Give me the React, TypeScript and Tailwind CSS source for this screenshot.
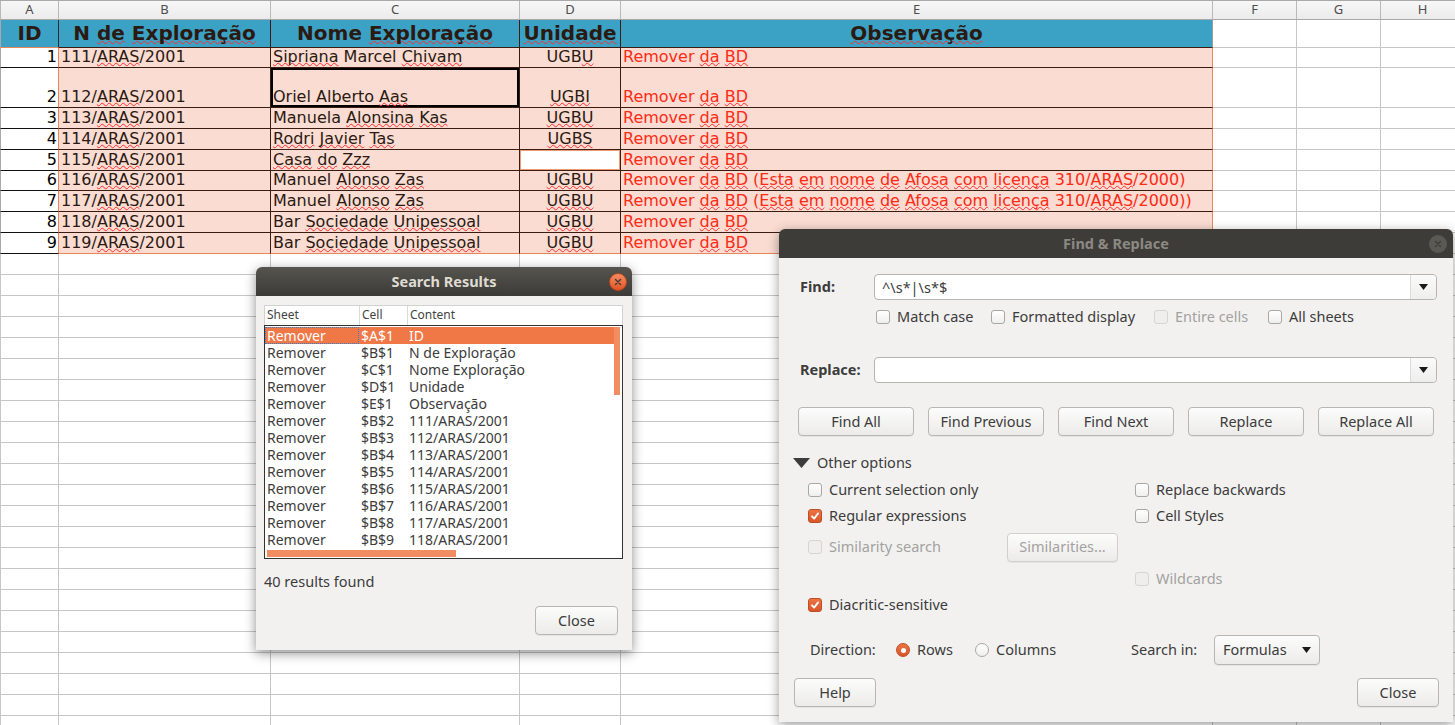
import React from "react"

const colW = ["w-[59px]", "w-[212px]", "w-[249px]", "w-[101px]", "w-[592px]", "w-[84px]", "w-[84px]", "w-[84px]"]
const letters = ["A", "B", "C", "D", "E", "F", "G", "H"]

// words between ~ get the spell-check squiggle
function Spell({ text }: { text: string }) {
  const parts = text.split("~")
  return (
    <span className="whitespace-pre">
      {parts.map((p, i) =>
        i % 2 ? (
          <span key={i} className="[text-decoration:underline_wavy_#ff2b2b_1px] [text-underline-offset:0px] [text-decoration-skip-ink:none]">
            {p}
          </span>
        ) : (
          p
        ),
      )}
    </span>
  )
}

type Row = { h: string; id: string; b: string; c: string; d: string; e: string; emptyD?: boolean; cursor?: boolean; last?: boolean }

const rows: Row[] = [
  { h: "h-[20px]", id: "1", b: "111/~ARAS~/2001", c: "~Sipriana~ Marcel ~Chivam~", d: "UGB~U~", e: "Remover ~da~ ~BD~" },
  { h: "h-[40px]", id: "2", b: "112/~ARAS~/2001", c: "Oriel Alberto ~Aas~", d: "~UGBI~", e: "Remover ~da~ ~BD~", cursor: true },
  { h: "h-[21px]", id: "3", b: "113/~ARAS~/2001", c: "Manuela ~Alonsina~ ~Kas~", d: "~UGBU~", e: "Remover ~da~ ~BD~" },
  { h: "h-[21px]", id: "4", b: "114/~ARAS~/2001", c: "~Rodri~ ~Javier~ ~Tas~", d: "~UGBS~", e: "Remover ~da~ ~BD~" },
  { h: "h-[21px]", id: "5", b: "115/~ARAS~/2001", c: "~Casa~ ~do~ ~Zzz~", d: "", e: "Remover ~da~ ~BD~", emptyD: true },
  { h: "h-[20px]", id: "6", b: "116/~ARAS~/2001", c: "Manuel ~Alonso~ ~Zas~", d: "~UGBU~", e: "Remover ~da~ ~BD~ (~Esta~ ~em~ ~nome~ ~de~ ~Afosa~ ~com~ ~licença~ 310/~ARAS~/2000)" },
  { h: "h-[21px]", id: "7", b: "117/~ARAS~/2001", c: "Manuel ~Alonso~ ~Zas~", d: "~UGBU~", e: "Remover ~da~ ~BD~ (~Esta~ ~em~ ~nome~ ~de~ ~Afosa~ ~com~ ~licença~ 310/~ARAS~/2000))" },
  { h: "h-[21px]", id: "8", b: "118/~ARAS~/2001", c: "Bar ~Sociedade~ ~Unipessoal~", d: "~UGBU~", e: "Remover ~da~ ~BD~" },
  { h: "h-[21px]", id: "9", b: "119/~ARAS~/2001", c: "Bar ~Sociedade~ ~Unipessoal~", d: "~UGBU~", e: "Remover ~da~ ~BD~", last: true },
]

const results = [
  ["$A$1", "ID"],
  ["$B$1", "N de Exploração"],
  ["$C$1", "Nome Exploração"],
  ["$D$1", "Unidade"],
  ["$E$1", "Observação"],
  ["$B$2", "111/ARAS/2001"],
  ["$B$3", "112/ARAS/2001"],
  ["$B$4", "113/ARAS/2001"],
  ["$B$5", "114/ARAS/2001"],
  ["$B$6", "115/ARAS/2001"],
  ["$B$7", "116/ARAS/2001"],
  ["$B$8", "117/ARAS/2001"],
  ["$B$9", "118/ARAS/2001"],
]

function GridCells() {
  return (
    <>
      <div className="w-[84px] shrink-0 border-r border-b border-[#c6c6c6]" />
      <div className="w-[84px] shrink-0 border-r border-b border-[#c6c6c6]" />
      <div className="w-[84px] shrink-0 border-r border-b border-[#c6c6c6]" />
    </>
  )
}

function Sheet() {
  const cellText = "flex items-end whitespace-nowrap overflow-hidden text-[16px] leading-[19px] pb-[1px]"
  const headCell = "shrink-0 bg-[#3ba2c6] flex items-end justify-center whitespace-nowrap overflow-hidden pb-[3px]"
  return (
    <div className="flex flex-col font-['DejaVu_Sans',sans-serif] text-[#2b1a12]">
      {/* column letters */}
      <div className="flex h-[20px] border-t border-b border-[#a9a9a9] bg-linear-to-b from-[#f7f7f7] to-[#ebebeb]">
        {letters.map((l, i) => (
          <div
            key={l}
            className={`${colW[i]} shrink-0 border-r border-[#b9b9b9] ${i === 0 ? "border-l" : ""} flex items-center justify-center font-['Noto_Sans',sans-serif] text-[13px] text-[#4d4d4d]`}
          >
            {l}
          </div>
        ))}
      </div>

      {/* header row */}
      <div className="flex h-[28px] font-bold text-[20px] leading-[21px]">
        <div className={`w-[59px] border-l border-l-[#a9a9a9] border-r border-r-[#2b2b2b] border-b border-b-[#e9875c] ${headCell}`}>ID</div>
        <div className={`w-[212px] border-r border-b border-[#3b1c10] ${headCell}`}>
          <Spell text="N ~de~ ~Exploração~" />
        </div>
        <div className={`w-[249px] border-r border-b border-[#3b1c10] ${headCell}`}>
          <Spell text="Nome ~Exploração~" />
        </div>
        <div className={`w-[101px] border-r border-b border-[#3b1c10] ${headCell}`}>
          <Spell text="~Unidade~" />
        </div>
        <div className={`w-[592px] border-r border-r-[#9a9a9a] border-b border-b-[#3b1c10] ${headCell}`}>
          <Spell text="~Observação~" />
        </div>
        <GridCells />
      </div>

      {/* data rows */}
      {rows.map((r) => (
        <div key={r.id} className={`flex ${r.h}`}>
          <div className={`w-[59px] shrink-0 bg-white border-l border-l-[#a9a9a9] border-r border-r-[#e9875c] border-b border-b-[#111] justify-end pr-[1px] text-black ${cellText}`}>
            {r.id}
          </div>
          <div className={`w-[212px] shrink-0 bg-[#fadcd2] border-r border-r-[#3b1c10] border-b ${r.last ? "border-b-[#e9875c]" : "border-b-[#3b1c10]"} pl-[2px] ${cellText}`}>
            <Spell text={r.b} />
          </div>
          <div
            className={`w-[249px] shrink-0 bg-[#fadcd2] border-r border-r-[#3b1c10] border-b ${r.last ? "border-b-[#e9875c]" : "border-b-[#3b1c10]"} pl-[2px] ${cellText} ${r.cursor ? "shadow-[inset_0_0_0_2px_#000]" : ""}`}
          >
            <Spell text={r.c} />
          </div>
          <div
            className={`w-[101px] shrink-0 border-r border-r-[#3b1c10] border-b ${r.last ? "border-b-[#e9875c]" : "border-b-[#3b1c10]"} justify-center ${cellText} ${r.emptyD ? "bg-white shadow-[inset_0_0_0_1px_#ef9a70]" : "bg-[#fadcd2]"}`}
          >
            <Spell text={r.d} />
          </div>
          <div className={`w-[592px] shrink-0 bg-[#fadcd2] border-r border-r-[#e9875c] border-b ${r.last ? "border-b-[#e9875c]" : "border-b-[#3b1c10]"} pl-[2px] text-[#ff2a14] ${cellText}`}>
            <Spell text={r.e} />
          </div>
          <GridCells />
        </div>
      ))}

      {/* empty rows */}
      {Array.from({ length: 23 }).map((_, i) => (
        <div key={i} className="flex h-[21px]">
          <div className="w-[59px] shrink-0 border-l border-r border-b border-[#c6c6c6]" />
          <div className="w-[212px] shrink-0 border-r border-b border-[#c6c6c6]" />
          <div className="w-[249px] shrink-0 border-r border-b border-[#c6c6c6]" />
          <div className="w-[101px] shrink-0 border-r border-b border-[#c6c6c6]" />
          <div className="w-[592px] shrink-0 border-r border-b border-[#c6c6c6]" />
          <GridCells />
        </div>
      ))}
    </div>
  )
}

function Check({ checked, disabled }: { checked?: boolean; disabled?: boolean }) {
  if (checked)
    return (
      <span className="w-[14px] h-[14px] rounded-[3px] bg-linear-to-b from-[#ec7444] to-[#d9552a] border border-[#bf4d1f] flex items-center justify-center shrink-0">
        <svg width="10" height="10" viewBox="0 0 10 10">
          <path d="M2 5.3 L4.1 7.6 L8.1 2.4" stroke="white" strokeWidth="1.8" fill="none" strokeLinecap="round" strokeLinejoin="round" />
        </svg>
      </span>
    )
  return (
    <span
      className={`w-[14px] h-[14px] rounded-[3px] border shrink-0 ${disabled ? "border-[#d6d5d3] bg-[#efeeec]" : "border-[#a8a7a4] bg-linear-to-b from-white to-[#efefee]"}`}
    />
  )
}

function Opt({ label, checked, disabled, className }: { label: string; checked?: boolean; disabled?: boolean; className?: string }) {
  return (
    <div className={`flex items-center gap-[7px] whitespace-nowrap ${className ?? ""}`}>
      <Check checked={checked} disabled={disabled} />
      <span className={disabled ? "text-[#a3a2a0]" : "text-[#3c3c3c]"}>{label}</span>
    </div>
  )
}

function Btn({ children, className, disabled }: { children: React.ReactNode; className?: string; disabled?: boolean }) {
  return (
    <div
      className={`rounded-[4px] border bg-linear-to-b from-[#fcfcfc] to-[#ecebe9] flex items-center justify-center shadow-[0_1px_0_rgba(0,0,0,0.05)] ${disabled ? "text-[#a3a2a0] border-[#d0cfcc]" : "text-[#3c3c3c] border-[#b7b6b3]"} ${className ?? ""}`}
    >
      {children}
    </div>
  )
}

function Arrow() {
  return (
    <svg width="9" height="6" viewBox="0 0 9 6">
      <path d="M0 0 H9 L4.5 6 Z" fill="#1a1a1a" />
    </svg>
  )
}

function SearchResults() {
  return (
    <div className="absolute left-[256px] top-[267px] w-[376px] rounded-t-[6px] overflow-hidden shadow-[0_3px_12px_rgba(0,0,0,0.45)] font-['Noto_Sans',sans-serif]">
      <div className="h-[29px] bg-linear-to-b from-[#55544f] to-[#3c3b37] grid grid-cols-[1fr_auto_1fr] items-center">
        <span />
        <span className="text-[14.5px] font-bold text-[#dfdbd2]">Search Results</span>
        <span className="flex justify-end pr-[5px]">
          <span className="w-[18px] h-[18px] rounded-full bg-linear-to-b from-[#f58c60] to-[#df5423] border border-[#b9461c] flex items-center justify-center">
            <svg width="8" height="8" viewBox="0 0 8 8">
              <path d="M1.5 1.5 L6.5 6.5 M6.5 1.5 L1.5 6.5" stroke="#3c3b37" strokeWidth="1.4" strokeLinecap="round" />
            </svg>
          </span>
        </span>
      </div>
      <div className="h-[354px] bg-[#f2f1f0] pl-[8px] pt-[9px] flex flex-col text-[14.5px] text-[#3c3c3c]">
        <div className="w-[359px] h-[254px] flex flex-col bg-white">
          <div className="h-[20px] flex border-t border-x border-[#d2d2d2] text-[12px] leading-[18px] text-[#444]">
            <div className="w-[95px] border-r border-[#dadada] pl-[2px]">Sheet</div>
            <div className="w-[48px] border-r border-[#dadada] pl-[2px]">Cell</div>
            <div className="flex-1 pl-[2px]">Content</div>
          </div>
          <div className="flex-1 border border-[#333] relative overflow-hidden pt-[1px] text-[14px]">
            {results.map(([cell, content], i) => (
              <div key={cell} className={`h-[17px] w-[349px] flex leading-[17px] whitespace-nowrap ${i === 0 ? "bg-[#f07746] text-white" : ""}`}>
                <div className={`w-[94px] pl-[2px] ${i === 0 ? "outline outline-dotted outline-[#2f7fd6] -outline-offset-1" : ""}`}>Remover</div>
                <div className="w-[48px] pl-[2px]">{cell}</div>
                <div className="flex-1 pl-[2px]">{content}</div>
              </div>
            ))}
            <div className="absolute right-[2px] top-[1px] w-[6px] h-[68px] bg-[#f28d63]" />
            <div className="absolute left-[2px] bottom-[1px] w-[189px] h-[7px] bg-[#f28d63]" />
          </div>
        </div>
        <div className="mt-[12px] leading-[20px]">40 results found</div>
        <div className="flex justify-end pr-[14px] mt-[15px]">
          <Btn className="w-[83px] h-[29px]">Close</Btn>
        </div>
      </div>
    </div>
  )
}

function FindReplace() {
  return (
    <div className="absolute left-[779px] top-[229px] w-[674px] rounded-t-[6px] overflow-hidden shadow-[0_3px_12px_rgba(0,0,0,0.4)] font-['Noto_Sans',sans-serif] text-[14.5px] text-[#3c3c3c]">
      <div className="h-[29px] bg-[#3d3c38] grid grid-cols-[1fr_auto_1fr] items-center">
        <span />
        <span className="font-bold text-[#8c8983]">Find &amp; Replace</span>
        <span className="flex justify-end pr-[6px]">
          <span className="w-[18px] h-[18px] rounded-full bg-[#5a5954] flex items-center justify-center">
            <svg width="8" height="8" viewBox="0 0 8 8">
              <path d="M1.5 1.5 L6.5 6.5 M6.5 1.5 L1.5 6.5" stroke="#3d3c38" strokeWidth="1.4" strokeLinecap="round" />
            </svg>
          </span>
        </span>
      </div>
      <div className="h-[464px] bg-[#f2f1f0] flex flex-col pt-[16px]">
        {/* find */}
        <div className="flex items-center h-[26px] pl-[21px] pr-[16px]">
          <span className="w-[74px] font-bold">Find:</span>
          <div className="flex-1 h-full rounded-[4px] border border-[#b6b5b2] bg-white flex">
            <span className="flex-1 pl-[7px] leading-[24px]">^\s*|\s*$</span>
            <span className="w-[26px] border-l border-[#dcdbd9] bg-linear-to-b from-[#fafafa] to-[#eeeeed] flex items-center justify-center rounded-r-[4px]">
              <Arrow />
            </span>
          </div>
        </div>
        <div className="flex items-center h-[18px] mt-[8px] pl-[97px]">
          <Opt label="Match case" className="w-[115px]" />
          <Opt label="Formatted display" className="w-[163px]" />
          <Opt label="Entire cells" disabled className="w-[114px]" />
          <Opt label="All sheets" />
        </div>

        {/* replace */}
        <div className="flex items-center h-[26px] mt-[31px] pl-[21px] pr-[16px]">
          <span className="w-[74px] font-bold">Replace:</span>
          <div className="flex-1 h-full rounded-[4px] border border-[#b6b5b2] bg-white flex">
            <span className="flex-1" />
            <span className="w-[26px] border-l border-[#dcdbd9] bg-linear-to-b from-[#fafafa] to-[#eeeeed] flex items-center justify-center rounded-r-[4px]">
              <Arrow />
            </span>
          </div>
        </div>

        {/* buttons */}
        <div className="flex h-[29px] mt-[24px] pl-[19px] gap-[14px]">
          <Btn className="w-[116px]">Find All</Btn>
          <Btn className="w-[116px]">Find Previous</Btn>
          <Btn className="w-[116px]">Find Next</Btn>
          <Btn className="w-[116px]">Replace</Btn>
          <Btn className="w-[116px]">Replace All</Btn>
        </div>

        {/* other options */}
        <div className="flex items-center h-[18px] mt-[18px] pl-[14px] gap-[7px]">
          <svg width="17" height="10" viewBox="0 0 17 10">
            <path d="M0 0 H17 L8.5 10 Z" fill="#3c3c3c" />
          </svg>
          <span>Other options</span>
        </div>

        <div className="grid grid-cols-[199px_128px_1fr] grid-rows-[26px_26px_36px_28px_24px] items-center mt-[5px] pl-[29px]">
          <Opt label="Current selection only" />
          <span />
          <Opt label="Replace backwards" />

          <Opt label="Regular expressions" checked />
          <span />
          <Opt label="Cell Styles" />

          <Opt label="Similarity search" disabled />
          <Btn className="w-[111px] h-[29px]" disabled>
            Similarities...
          </Btn>
          <span />

          <span />
          <span />
          <Opt label="Wildcards" disabled />

          <Opt label="Diacritic-sensitive" checked />
          <span />
          <span />
        </div>

        {/* direction */}
        <div className="flex items-center h-[30px] mt-[18px] pl-[31px]">
          <span className="w-[86px]">Direction:</span>
          <div className="w-[79px] flex items-center gap-[7px]">
            <span className="w-[14px] h-[14px] rounded-full bg-linear-to-b from-[#ec7444] to-[#d9552a] border border-[#bf4d1f] flex items-center justify-center">
              <span className="w-[5px] h-[5px] rounded-full bg-white" />
            </span>
            <span>Rows</span>
          </div>
          <div className="w-[156px] flex items-center gap-[7px]">
            <span className="w-[14px] h-[14px] rounded-full border border-[#a8a7a4] bg-linear-to-b from-white to-[#efefee]" />
            <span>Columns</span>
          </div>
          <span className="w-[83px]">Search in:</span>
          <Btn className="w-[106px] h-[30px] !justify-between px-[8px]">
            <span>Formulas</span>
            <Arrow />
          </Btn>
        </div>

        {/* bottom buttons */}
        <div className="flex justify-between h-[29px] mt-[13px] pl-[15px] pr-[14px]">
          <Btn className="w-[82px]">Help</Btn>
          <Btn className="w-[82px]">Close</Btn>
        </div>
      </div>
    </div>
  )
}

export default function App() {
  return (
    <div className="relative w-[1455px] h-[725px] overflow-hidden bg-white">
      <Sheet />
      <SearchResults />
      <FindReplace />
    </div>
  )
}
